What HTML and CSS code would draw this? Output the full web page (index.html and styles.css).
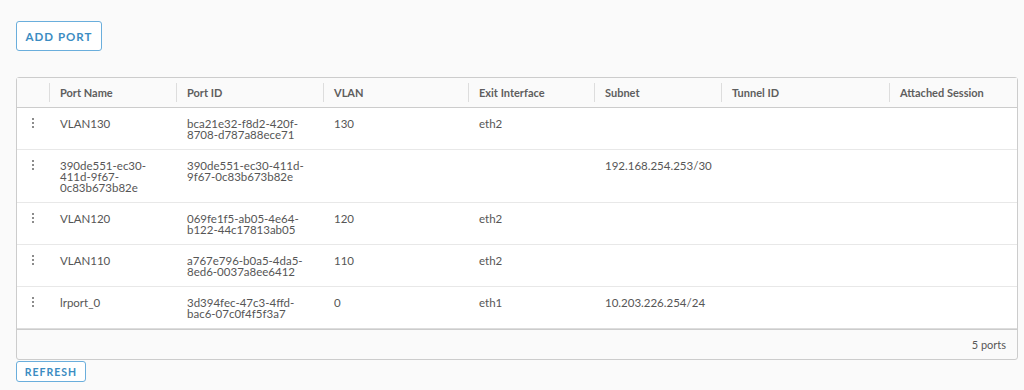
FILE: index.html
```html
<!DOCTYPE html>
<html>
<head>
<meta charset="utf-8">
<link rel="stylesheet" href="styles.css">
</head>
<body>
<div class="page">
  <div class="toolbar">
    <button class="btn btn-lg">ADD PORT</button>
  </div>
  <div class="datagrid">
    <table class="grid">
      <colgroup>
        <col class="c-act"><col class="c-name"><col class="c-id"><col class="c-vlan"><col class="c-exit"><col class="c-subnet"><col class="c-tunnel"><col class="c-session">
      </colgroup>
      <thead>
        <tr>
          <th></th>
          <th class="sep">Port Name</th>
          <th class="sep">Port ID</th>
          <th class="sep">VLAN</th>
          <th class="sep">Exit Interface</th>
          <th class="sep">Subnet</th>
          <th class="sep">Tunnel ID</th>
          <th class="sep">Attached Session</th>
        </tr>
      </thead>
      <tbody>
        <tr>
          <td class="act"><span class="dots"><i></i><i></i><i></i></span></td>
          <td>VLAN130</td>
          <td>bca21e32-f8d2-420f-<br>8708-d787a88ece71</td>
          <td>130</td>
          <td>eth2</td>
          <td></td>
          <td></td>
          <td></td>
        </tr>
        <tr>
          <td class="act"><span class="dots"><i></i><i></i><i></i></span></td>
          <td>390de551-ec30-<br>411d-9f67-<br>0c83b673b82e</td>
          <td>390de551-ec30-411d-<br>9f67-0c83b673b82e</td>
          <td></td>
          <td></td>
          <td>192.168.254.253/30</td>
          <td></td>
          <td></td>
        </tr>
        <tr>
          <td class="act"><span class="dots"><i></i><i></i><i></i></span></td>
          <td>VLAN120</td>
          <td>069fe1f5-ab05-4e64-<br>b122-44c17813ab05</td>
          <td>120</td>
          <td>eth2</td>
          <td></td>
          <td></td>
          <td></td>
        </tr>
        <tr>
          <td class="act"><span class="dots"><i></i><i></i><i></i></span></td>
          <td>VLAN110</td>
          <td>a767e796-b0a5-4da5-<br>8ed6-0037a8ee6412</td>
          <td>110</td>
          <td>eth2</td>
          <td></td>
          <td></td>
          <td></td>
        </tr>
        <tr>
          <td class="act"><span class="dots"><i></i><i></i><i></i></span></td>
          <td>lrport_0</td>
          <td>3d394fec-47c3-4ffd-<br>bac6-07c0f4f5f3a7</td>
          <td>0</td>
          <td>eth1</td>
          <td>10.203.226.254/24</td>
          <td></td>
          <td></td>
        </tr>
      </tbody>
    </table>
    <div class="footer">5 ports</div>
  </div>
  <div class="bottom">
    <button class="btn btn-sm">REFRESH</button>
  </div>
</div>
</body>
</html>
```

FILE: styles.css
```css
html, body {
  margin: 0;
  padding: 0;
  background: #fafafa;
}
body {
  font-family: "Lato", "Noto Sans", sans-serif;
  color: #565656;
}
.page {
  padding: 21px 0 0 16px;
}
.toolbar {
  display: flex;
  height: 30px;
  margin-bottom: 26px;
}
.btn {
  font-family: "Lato", "Noto Sans", sans-serif;
  font-weight: 700;
  letter-spacing: 1px;
  color: #3b8cc2;
  background: #fff;
  border: 1px solid #6aaedc;
  border-radius: 3px;
  padding: 0;
  cursor: pointer;
  box-sizing: border-box;
}
.btn-lg {
  width: 86px;
  height: 30px;
  font-size: 11.5px;
}
.btn-sm {
  width: 70px;
  height: 21px;
  font-size: 10.5px;
}
.datagrid {
  width: 1002px;
  box-sizing: border-box;
  border: 1px solid #ccc;
  border-radius: 3px;
  background: #fafafa;
}
.grid {
  width: 1000px;
  border-collapse: collapse;
  table-layout: fixed;
}
.c-act { width: 32px; }
.c-name { width: 127px; }
.c-id { width: 147px; }
.c-vlan { width: 145px; }
.c-exit { width: 126px; }
.c-subnet { width: 127px; }
.c-tunnel { width: 168px; }
.c-session { width: 128px; }
th {
  position: relative;
  height: 29px;
  text-align: left;
  font-size: 11px;
  font-weight: 700;
  color: #5e5e5e;
  padding: 0 0 0 11px;
  background: #fafafa;
  border-bottom: 1px solid #ccc;
  white-space: nowrap;
}
th.sep::before {
  content: "";
  position: absolute;
  left: 0;
  top: 5px;
  bottom: 5px;
  width: 1px;
  background: #ddd;
}
td {
  vertical-align: top;
  font-size: 11.5px;
  line-height: 11px;
  padding: 10px 6px 9px 11px;
  background: #fff;
  border-bottom: 1px solid #e8e8e8;
  color: #565656;
}
tbody tr:first-child td {
  border-top: 1px solid #ddd;
}
tbody tr:last-child td {
  border-bottom: 1px solid #ddd;
}
td.act {
  padding: 10px 0 0 0;
}
.dots {
  display: flex;
  flex-direction: column;
  align-items: center;
  gap: 2px;
}
.dots i {
  display: block;
  width: 2px;
  height: 2px;
  border-radius: 1px;
  background: #666;
}
.footer {
  border-top: 1px solid #ccc;
  height: 29px;
  display: flex;
  align-items: center;
  justify-content: flex-end;
  padding-right: 11px;
  font-size: 11px;
  color: #565656;
}
.bottom {
  display: flex;
  margin-top: 1px;
}
```
